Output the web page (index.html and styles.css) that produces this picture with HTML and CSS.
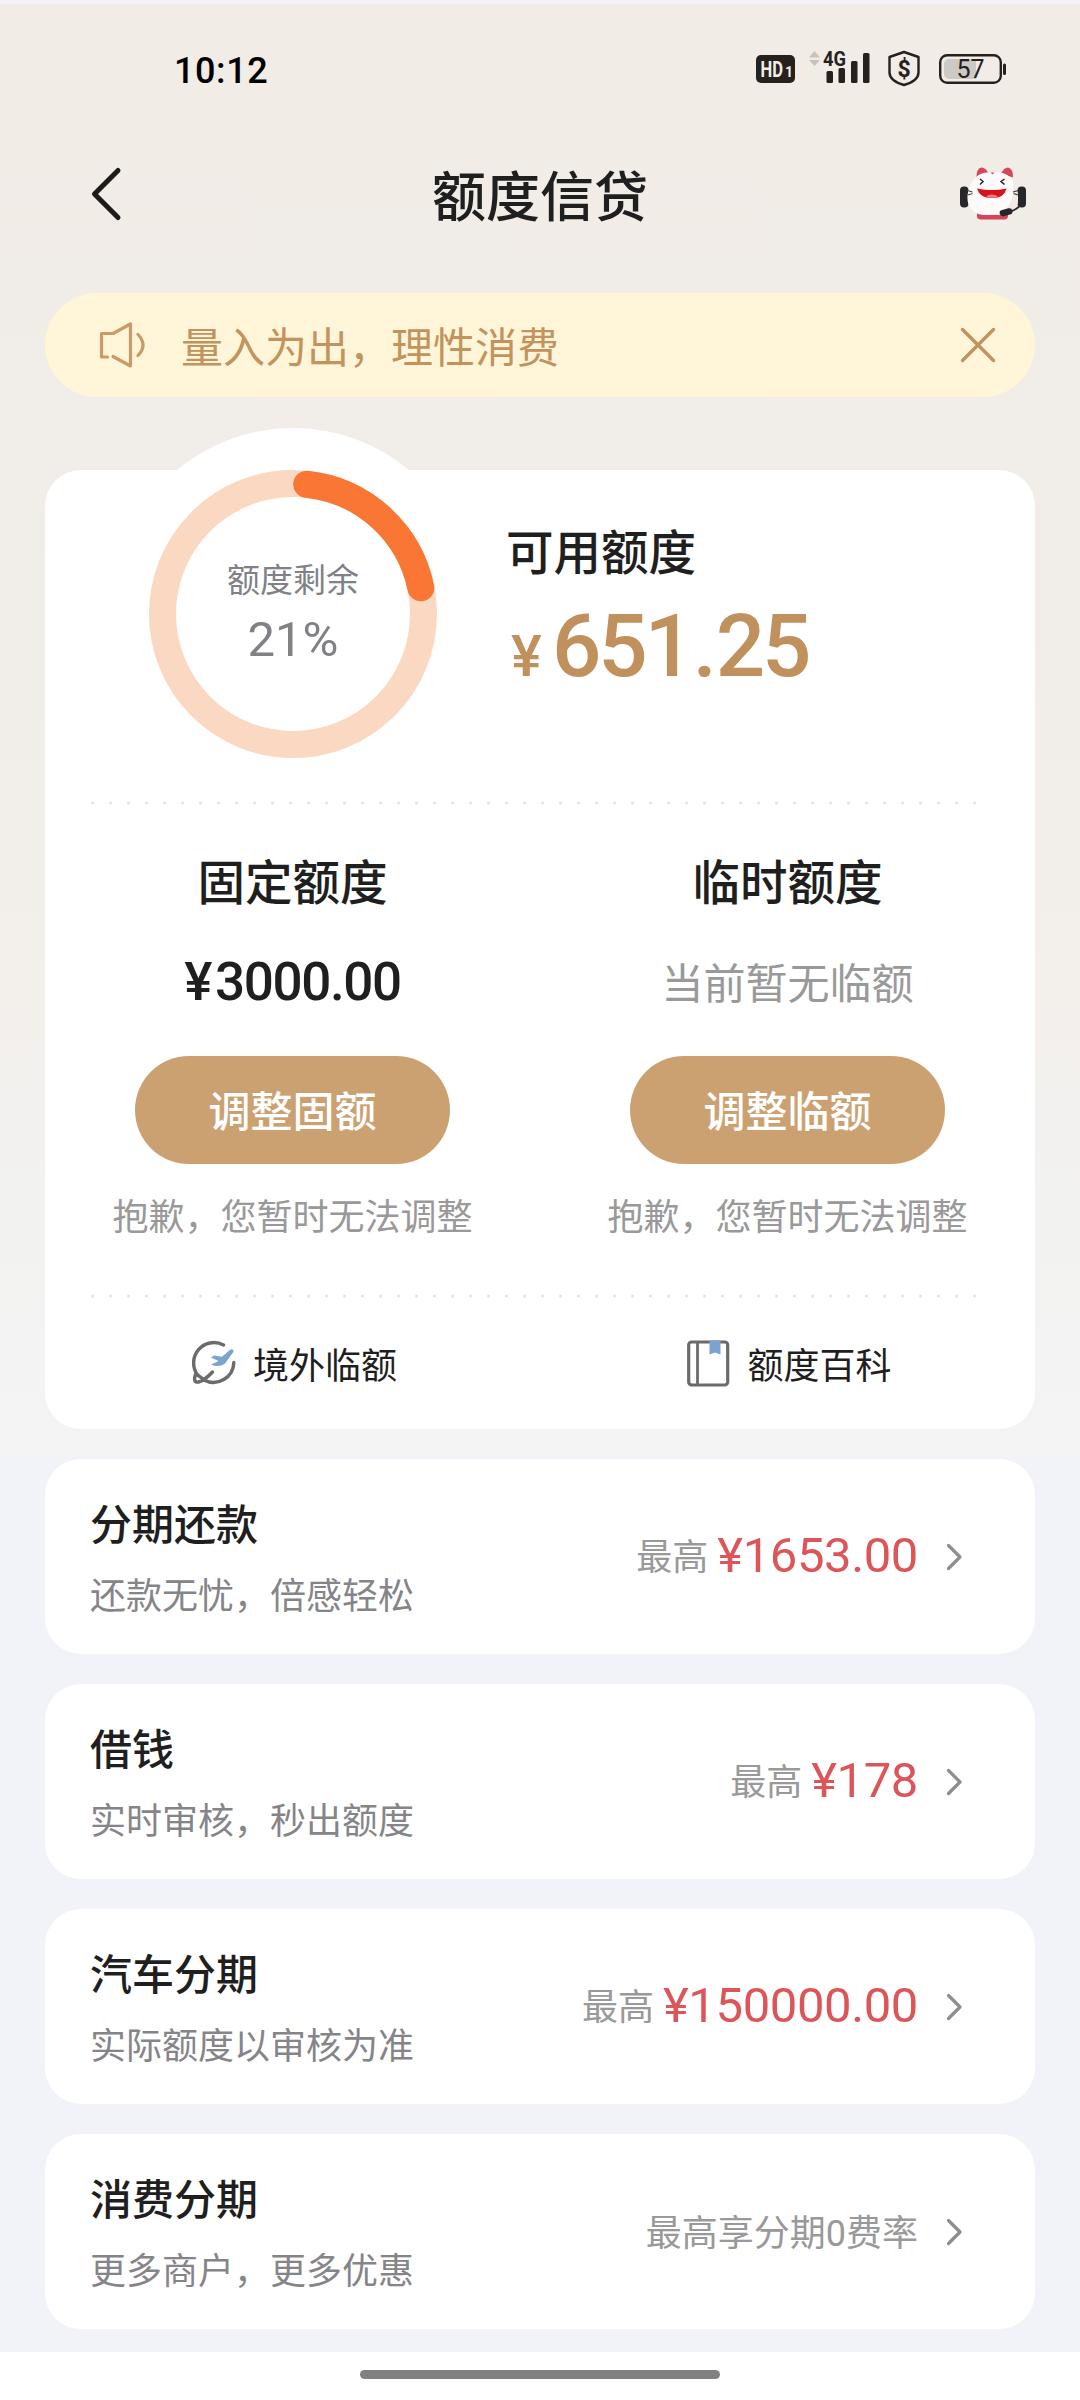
FILE: index.html
```html
<!DOCTYPE html>
<html lang="zh-CN">
<head>
<meta charset="utf-8">
<title>额度信贷</title>
<link rel="stylesheet" href="styles.css">
</head>
<body>
<div class="screen">
  <div class="status">
    <span class="clock">10:12</span>
    <div class="indicators">
      <svg class="hd" width="39" height="28" viewBox="0 0 39 28"><rect width="39" height="28" rx="5" fill="#26211d"/><text class="hd-text" x="4.5" y="21.5" textLength="22.5" lengthAdjust="spacingAndGlyphs">HD</text><text class="hd-num" x="29" y="21.5">1</text></svg>
      <svg class="signal" width="62" height="42" viewBox="0 -8 62 42"><path d="M0 7.5 5.500 1l5.500 6.500zM0 10h11l-5.500 6z" fill="#c6c2bc"/><text class="net-text" x="14" y="16" textLength="23" lengthAdjust="spacingAndGlyphs">4G</text><g fill="#26211d"><rect x="17.500" y="21" width="6.500" height="12" rx="1.500"/><rect x="29.500" y="18" width="6.500" height="15" rx="1.500"/><rect x="42" y="11" width="6.500" height="22" rx="1.500"/><rect x="54" y="3" width="6.500" height="30" rx="1.500"/></g></svg>
      <svg class="shield" width="34" height="37" viewBox="0 0 34 37"><path d="M17 2 31.500 7v15.500c0 6.500-7.500 10.500-14.500 12.500C10 33 2.500 29 2.500 22.500V7z" fill="none" stroke="#26211d" stroke-width="2.400" stroke-linejoin="round"/><text class="shield-text" x="17" y="26.500" text-anchor="middle">$</text></svg>
      <svg class="battery" width="68" height="31" viewBox="0 0 68 31"><rect x="1.200" y="1.200" width="60.600" height="27.600" rx="7" fill="none" stroke="#26211d" stroke-width="2.400"/><path d="M10 5h27v20H10a5 5 0 0 1-5-5V10a5 5 0 0 1 5-5z" fill="#cdc9c4"/><rect x="64" y="9.500" width="3" height="11.500" rx="1.500" fill="#26211d"/><text class="battery-text" x="31.500" y="24" text-anchor="middle">57</text></svg>
    </div>
  </div>

  <header class="header">
    <svg class="back" width="32" height="56" viewBox="0 0 32 56"><path d="M28 4.500 4.500 28 28 51.500" fill="none" stroke="#1d1b19" stroke-width="5" stroke-linecap="round" stroke-linejoin="round"/></svg>
    <h1 class="title">额度信贷</h1>
    <svg class="mascot" width="68" height="54" viewBox="0 0 68 54">
      <path d="M18 45h31v4q0 3.500-4 3.500H22q-4 0-4-3.500z" fill="#d94358"/>
      <path d="M17.500 10Q17.500 1 22.500 0.500q4.500 0 7 6zM42 6.500q3-6 7-6 5 1 5 10z" fill="#d8465c"/>
      <rect x="1" y="19.500" width="8.500" height="21" rx="4" fill="#26272b"/><rect x="58.500" y="19.500" width="8.500" height="21" rx="4" fill="#26272b"/>
      <path d="M34 5.500C44 4 52 8.500 55.500 17 62 31 60 45 46 48H24C8 46 5 31 12 17 16 8.500 24 4 34 5.500z" fill="#fffafa"/>
      <path d="M54 14c8 15 7 31-8 34H33c14-1 23-12 21-34z" fill="#f5e8e6"/>
      <path d="M8.500 23.500l5 1.500M9 28l4.500-1.500M59 23.500l-5 1.500M59 28l-4.500-1.500" stroke="#444" stroke-width="1.200"/>
      <path d="M61 38.500q-4 5-13 7" fill="none" stroke="#26272b" stroke-width="2"/><rect x="40.500" y="42" width="13" height="6.500" rx="3.200" fill="#26272b" transform="rotate(-14 47 45)"/>
      <path d="M21 12l3 2.500-3 3M45.500 12l-3.500 2.500 3.500 3" fill="none" stroke="#222" stroke-width="1.500"/>
      <path d="M31.500 5.500h4l-2 2z" fill="#d8465c"/>
      <path d="M18 21.500q15 3 29.500 0-2 9.500-14.500 9.500T18 21.500z" fill="#d9131c"/><path d="M27 29.500q6-4 12 0-6 2.500-12 0z" fill="#f08080"/>
    </svg>
  </header>

  <div class="notice">
    <svg width="48" height="48" viewBox="0 0 48 48" fill="none" stroke="#cb9a66" stroke-width="3.200" stroke-linecap="round" stroke-linejoin="round"><path d="M8.500 36H2.500V12.500H14L31.500 3v42L14 35.500"/><path d="M39 13.500q10 10.500 0 21"/></svg>
    <span class="notice-text">量入为出，理性消费</span>
    <svg class="close" width="36" height="36" viewBox="0 0 36 36"><path d="M2.500 2.500l31 31M33.500 2.500l-31 31" stroke="#c2935d" stroke-width="3.400" stroke-linecap="round"/></svg>
  </div>

  <main class="content">
    <section class="card quota">
      <div class="summary">
        <div class="gauge">
          <svg width="362" height="362" viewBox="-181 -181 362 362"><circle r="181" fill="#fff"/><g fill="none" stroke-width="27"><circle cy="5" r="130.500" stroke="#fad8c1"/><path d="M13.640-124.790A130.500 130.500 0 0 1 127.830-21.240" stroke="#f97634" stroke-linecap="round"/></g></svg>
          <div class="gauge-label"><span class="gauge-name">额度剩余</span><span class="gauge-value">21%</span></div>
        </div>
        <div class="available">
          <h2 class="heading">可用额度</h2>
          <div class="amount"><span class="currency">¥</span><span>651<span class="point">.</span>25</span></div>
        </div>
      </div>
      <svg class="dots" width="900" height="4" viewBox="0 0 900 4"><path d="M1.500 2H884" stroke="#e3e3e3" stroke-width="3" stroke-linecap="round" stroke-dasharray="0 18"/></svg>
      <div class="limits">
        <div class="limit">
          <h2 class="heading">固定额度</h2>
          <p class="limit-value"><span class="yen">¥</span>3000.00</p>
          <button class="button">调整固额</button>
          <p class="hint">抱歉，您暂时无法调整</p>
        </div>
        <div class="limit">
          <h2 class="heading">临时额度</h2>
          <p class="limit-empty">当前暂无临额</p>
          <button class="button">调整临额</button>
          <p class="hint">抱歉，您暂时无法调整</p>
        </div>
      </div>
      <svg class="dots" width="900" height="4" viewBox="0 0 900 4"><path d="M1.500 2H884" stroke="#e3e3e3" stroke-width="3" stroke-linecap="round" stroke-dasharray="0 18"/></svg>
      <div class="links">
        <a class="link"><svg width="44" height="46" viewBox="0 0 44 46"><g fill="none" stroke="#6b6b6b" stroke-width="3.400" stroke-linecap="round"><path d="M31.500 5A20.300 20.300 0 0 0 6 35.500"/><path d="M41.800 22.500A20.300 20.300 0 0 1 12 40"/><path d="M4 33.500q-4 9.500 3 8.500Q13.500 39.500 20.500 32M6.500 35.500l5.500 4.500"/></g><path d="M19 17.500l3-2 8 1.200 8.500-7.200q3.500-1 3 2.200L33 23.500q-6 4.500-14 1l3.500-1.500 4-2z" fill="#7ba3cf"/></svg>境外临额</a>
        <a class="link"><svg width="43" height="47" viewBox="0 0 43 47"><rect x="1.700" y="2" width="39" height="43" rx="3" fill="none" stroke="#6b6b6b" stroke-width="3.200"/><path d="M10.500 2v43" stroke="#6b6b6b" stroke-width="2.800"/><path d="M22.500 0.500h11v14l-5.500-2-5.500 2z" fill="#7ba3cf"/></svg>额度百科</a>
      </div>
    </section>

    <section class="card product"><div class="product-info"><h3 class="product-name">分期还款</h3><p class="product-desc">还款无忧，倍感轻松</p></div><div class="product-offer"><span class="upto">最高</span><strong class="price">¥1653.00</strong></div><svg class="chevron" width="18" height="28" viewBox="0 0 18 28"><path d="M2.500 2.500 14 14 2.500 25.500"/></svg></section>
    <section class="card product"><div class="product-info"><h3 class="product-name">借钱</h3><p class="product-desc">实时审核，秒出额度</p></div><div class="product-offer"><span class="upto">最高</span><strong class="price">¥178</strong></div><svg class="chevron" width="18" height="28" viewBox="0 0 18 28"><path d="M2.500 2.500 14 14 2.500 25.500"/></svg></section>
    <section class="card product"><div class="product-info"><h3 class="product-name">汽车分期</h3><p class="product-desc">实际额度以审核为准</p></div><div class="product-offer"><span class="upto">最高</span><strong class="price">¥150000.00</strong></div><svg class="chevron" width="18" height="28" viewBox="0 0 18 28"><path d="M2.500 2.500 14 14 2.500 25.500"/></svg></section>
    <section class="card product"><div class="product-info"><h3 class="product-name">消费分期</h3><p class="product-desc">更多商户，更多优惠</p></div><div class="product-offer">最高享分期0费率</div><svg class="chevron" width="18" height="28" viewBox="0 0 18 28"><path d="M2.500 2.500 14 14 2.500 25.500"/></svg></section>
  </main>
  <footer class="nav"><div class="home-bar"></div></footer>
</div>
</body>
</html>
```
FILE: styles.css
```css
* { box-sizing: border-box; }
body { margin: 0; font-family: Roboto, "Noto Sans CJK SC", sans-serif; color: #1f1f1f; }
h1, h2, h3, p { margin: 0; font-weight: 500; }
svg { display: block; flex: none; }

.screen {
  width: 1080px; height: 2400px; display: flex; flex-direction: column; overflow: hidden;
  border-top: 4px solid #f3f2f7;
  background: linear-gradient(#f1ece6 0, #f1ede8 680px, #f3efeb 980px, #f2f2f1 1200px, #f4f4f4 1452px, #f2f3f8 1453px);
}

.status { height: 128px; display: flex; justify-content: space-between; align-items: center; padding: 2px 73px 0 174px; }
.clock { font-size: 36px; font-weight: 500; letter-spacing: 0.6px; color: #000; padding-top: 4px; }
.indicators { display: flex; align-items: center; }
.signal { margin: -12px 0 0 14px; }
.shield { margin: 0 0 2px 16px; }
.battery { margin: 1px 0 0 18px; }
.indicators text { font-family: Roboto, sans-serif; fill: #26211d; }
.indicators .hd-text { font-size: 22px; font-weight: 700; fill: #f1ede8; }
.indicators .hd-num { font-size: 14px; font-weight: 700; fill: #f1ede8; }
.net-text { font-size: 21px; font-weight: 700; }
.shield-text { font-size: 23px; font-weight: 700; }
.battery-text { font-size: 25px; }

.header { height: 126px; display: grid; grid-template-columns: 1fr auto 1fr; align-items: center; padding: 0 53px; }
.back { margin-left: 37px; margin-top: -2px; }
.title { font-size: 54px; line-height: 80px; padding-top: 8px; }
.mascot { justify-self: end; margin-top: -2px; }

.notice { height: 104px; margin: 35px 45px 0; padding: 0 39px 0 54px; border-radius: 52px; display: flex; align-items: center; background: #fff5d8; }
.notice-text { font-size: 42px; line-height: 60px; color: #c2935d; margin-left: 34px; padding-top: 8px; }
.close { margin-left: auto; }

.content { padding: 73px 45px 0; display: flex; flex-direction: column; gap: 30px; }
.card { background: #fff; border-radius: 36px; }
.quota { height: 959px; display: flex; flex-direction: column; }
.summary { height: 332px; display: flex; }
.gauge { width: 362px; height: 362px; margin: -42px 0 0 67px; position: relative; }
.gauge-label { position: absolute; inset: 0; display: flex; flex-direction: column; align-items: center; color: #808087; padding-top: 129px; }
.gauge-name { font-size: 33px; line-height: 48px; }
.gauge-value { font-size: 49px; line-height: 58px; margin-top: 6px; }
.available { padding: 49px 0 0 32px; }
.heading { font-size: 47.5px; line-height: 70px; }
.amount { display: flex; align-items: baseline; color: #c0905d; font-size: 87px; line-height: 96px; font-weight: 500; letter-spacing: -3.2px; margin-top: 9px; }
.currency { font-size: 58px; width: 41px; margin-left: 5px; }
.point { margin: 0 2px; }
.dots { margin-left: 46px; }

.limits { display: grid; grid-template-columns: 1fr 1fr; height: 491px; padding-top: 44px; }
.limit { display: flex; flex-direction: column; align-items: center; }
.limit-value { font-size: 53px; line-height: 62px; letter-spacing: -1.4px; margin-top: 32px; height: 73px; }
.yen { margin-right: 4px; }
.limit-empty { font-size: 42px; font-weight: 400; line-height: 60px; color: #999; margin-top: 36px; height: 69px; }
.button { width: 315px; height: 108px; margin-top: 32px; padding: 5px 0 0; border: 0; border-radius: 54px; background: #cca171; color: #fff; font: 500 42px/103px Roboto, "Noto Sans CJK SC", sans-serif; }
.hint { font-size: 36px; font-weight: 400; line-height: 52px; color: #999; margin-top: 28px; }

.links { display: grid; grid-template-columns: 1fr 1fr; height: 132px; }
.link { display: flex; align-items: center; justify-content: center; gap: 17px; font-size: 36px; padding-left: 4px; }

.product { height: 195px; display: flex; align-items: center; padding: 0 71px 0 45px; }
.product-info { flex: 1; padding-top: 6px; }
.product-name { font-size: 42px; line-height: 60px; }
.product-desc { font-size: 36px; font-weight: 400; line-height: 52px; color: #858589; margin-top: 15px; }
.product-offer { display: flex; align-items: center; font-size: 36px; color: #999; padding-bottom: 4px; }
.upto { padding-bottom: 2px; }
.price { font-size: 49px; line-height: 58px; font-weight: 400; letter-spacing: -0.4px; color: #dc5659; margin: 2px 0 0 9px; }
.chevron { margin-left: 28px; fill: none; stroke: #8e8e8e; stroke-width: 3.2; stroke-linecap: round; stroke-linejoin: round; }

.nav { height: 48px; margin-top: auto; padding-bottom: 3px; background: #fff; display: flex; align-items: center; justify-content: center; flex: none; }
.home-bar { width: 360px; height: 9px; border-radius: 5px; background: #808080; }
```
